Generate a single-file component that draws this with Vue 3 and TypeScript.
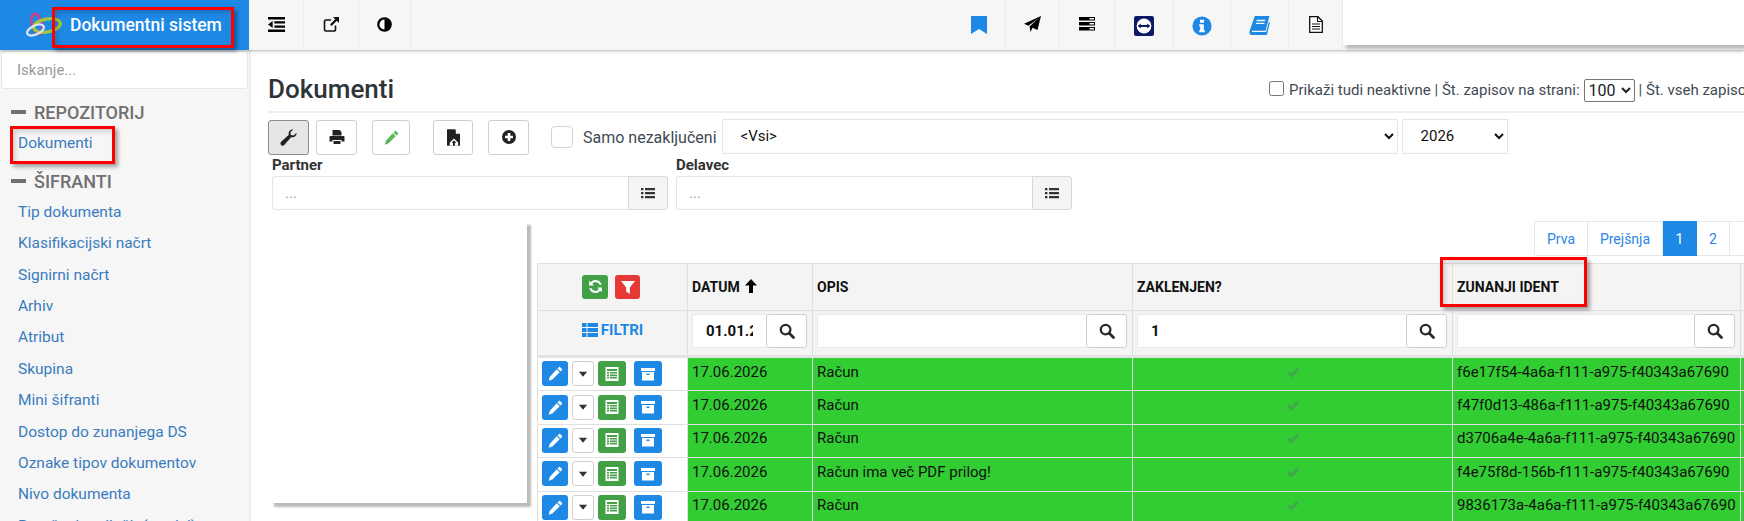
<template>
  <div class="page">
    <svg class="defs" width="0" height="0" aria-hidden="true">
      <symbol id="i-pencil" viewBox="0 0 16 16"><path d="M11.600 1.200c.4-.4 1-.4 1.400 0l1.800 1.800c.4.4.4 1 0 1.400l-1.500 1.500-3.200-3.200zM9.300 3.500l3.200 3.200-7.800 7.800L.8 15.600l1-4z" fill="currentColor" /></symbol>
      <symbol id="i-search" viewBox="0 0 16 16"><circle cx="6.600" cy="6.600" r="4.800" fill="none" stroke="currentColor" stroke-width="2.300" /><path d="M10 10l4.500 4.500" stroke="currentColor" stroke-width="2.800" stroke-linecap="round" /></symbol>
      <symbol id="i-list" viewBox="0 0 16 16"><path d="M1 3h2.400v2.200H1zM5 3h10v2.200H5zM1 7h2.400v2.200H1zM5 7h10v2.200H5zM1 11h2.400v2.200H1zM5 11h10v2.200H5z" fill="currentColor" /></symbol>
      <symbol id="i-thlist" viewBox="0 0 16 14"><path d="M0 0h4.500v4H0zM5.500 0H16v4H5.500zM0 5h4.500v4H0zM5.500 5H16v4H5.500zM0 10h4.500v4H0zM5.500 10H16v4H5.500z" fill="currentColor" /></symbol>
      <symbol id="i-caret" viewBox="0 0 16 16"><path d="M2.500 5h11L8 11.500z" fill="currentColor" /></symbol>
      <symbol id="i-listalt" viewBox="0 0 16 16"><path fill-rule="evenodd" d="M1.500 1h13v14h-13zM3 3v2h10V3zm0 3v1.600h2V6zm3 0v1.600h7V6zM3 8.400V10h2V8.400zm3 0V10h7V8.400zM3 10.800v1.600h2v-1.600zm3 0v1.600h7v-1.600z" fill="#fff" /></symbol>
      <symbol id="i-archive" viewBox="0 0 16 16"><path fill-rule="evenodd" d="M1 2h14v3H1zM2 6h12v8.500H2zm4.500 1.600v1.300h3V7.600z" fill="#fff" /></symbol>
    </svg>

    <header class="topbar">
      <div class="brand">
        <svg class="logo" viewBox="0 0 36 26" width="36" height="26">
          <ellipse cx="11" cy="12" rx="5" ry="10.500" transform="rotate(-15 11 12)" fill="none" stroke="#d63b7d" stroke-width="2.400" />
          <ellipse cx="21" cy="13.500" rx="13.500" ry="6.500" transform="rotate(-10 21 13.500)" fill="none" stroke="#a5c63b" stroke-width="3.200" />
          <ellipse cx="9.500" cy="18" rx="9" ry="4.500" transform="rotate(-25 9.500 18)" fill="none" stroke="#d8e6f5" stroke-width="2.200" />
        </svg>
        <span class="brand-name">Dokumentni sistem</span>
      </div>
      <nav class="tools">
        <a class="tool tool-first">
          <svg viewBox="0 0 16 14" width="17" height="15"><path d="M0 0h16v2.200H0zM6 3.900h10v2.100H6zM6 7.900h10V10H6zM0 11.800h16V14H0zM4.400 3.800v6.400L0 7z" fill="#000" /></svg>
        </a>
        <a class="tool tool-link">
          <svg viewBox="0 0 16 16" width="16" height="16"><path d="M8 4H3a1.500 1.500 0 0 0-1.500 1.500v8A1.500 1.500 0 0 0 3 15h8a1.500 1.500 0 0 0 1.500-1.500V9.500" fill="none" stroke="#111" stroke-width="1.600" /><path d="M10 1h6v6l-2.200-2.200-5.200 5.200-1.600-1.600 5.200-5.200z" fill="#111" /></svg>
        </a>
        <a class="tool tool-adjust">
          <svg viewBox="0 0 16 16" width="15" height="15"><circle cx="8" cy="8" r="6.600" fill="#fff" stroke="#000" stroke-width="2.400" /><path d="M8 2a6 6 0 0 1 0 12z" fill="#000" /></svg>
        </a>
        <span class="tools-gap"></span>
        <a class="tool tool-bookmark">
          <svg viewBox="0 0 16 18" width="16" height="18"><path d="M0 0h16v18l-8-5-8 5z" fill="#1e88e5" /></svg>
        </a>
        <a class="tool tool-plane">
          <svg viewBox="0 0 17 16" width="17" height="16"><path d="M17 0L13.500 14 8.600 11.800 6.400 16 5.600 10.600 14 2.600 4.400 9.700 0 7.800z" fill="#000" /></svg>
        </a>
        <a class="tool tool-server">
          <svg viewBox="0 0 16 14" width="16" height="14"><path fill-rule="evenodd" d="M0 0h16v3.600H0zM10.500 1v1.500H15V1zM0 5h16v3.600H0zM10.500 6v1.500H15V6zM0 10h16v3.600H0zM10.500 11v1.500H15V11z" fill="#000" /></svg>
        </a>
        <a class="tool tool-tv">
          <svg viewBox="0 0 20 20" width="20" height="20"><rect width="20" height="20" rx="2" fill="#0c1a66" /><circle cx="10" cy="10" r="7.400" fill="#fff" /><path d="M3.800 10l3-2.600v1.700h6.400V7.400l3 2.600-3 2.600v-1.700H6.800v1.700z" fill="#0c1a66" /></svg>
        </a>
        <a class="tool tool-info">
          <svg viewBox="0 0 20 20" width="20" height="20"><circle cx="10" cy="10" r="9.600" fill="#1e88e5" /><path d="M8 3.800h4v3H8zM7.200 8.300h4.600v6h1v2H7.200v-2h1v-4h-1z" fill="#fff" /></svg>
        </a>
        <a class="tool tool-book">
          <svg viewBox="0 0 22 20" width="21" height="19"><path fill-rule="evenodd" d="M6 0h15.500l-4 15.500H3.800c-1 0-1.300 1-.6 1.400H18L21 6l1 .8L18.800 20H3C.8 20 0 18 .5 16zM8 4v1.400h9V4zM7.200 7v1.400h9V7z" fill="#1e88e5" /></svg>
        </a>
        <a class="tool tool-file">
          <svg viewBox="0 0 14 17" width="14" height="17"><path d="M.7.7h8.200l4.400 4.400v11.200H.7z" fill="#fff" stroke="#111" stroke-width="1.300" /><path d="M8.500.7v4.800h4.800M3 8h8M3 10.500h8M3 13h8" fill="none" stroke="#111" stroke-width="1.100" /></svg>
        </a>
      </nav>
    </header>

    <div class="layout">
      <aside class="sidebar">
        <input class="side-search" type="text" placeholder="Iskanje..." />
        <div class="side-group" v-for="group in menu" :key="group.title">
          <h4 class="side-title"><i class="minus"></i>{{ group.title }}</h4>
          <a class="side-link" v-for="item in group.items" :key="item">{{ item }}</a>
        </div>
      </aside>

      <main class="content">
        <div class="heading">
          <h1 class="title">Dokumenti</h1>
          <div class="page-opts">
            <input class="opt-check" type="checkbox" />
            <span>Prikaži tudi neaktivne | Št. zapisov na strani:</span>
            <select class="page-size"><option>100</option></select>
            <span>| Št. vseh zapisov: 1240</span>
          </div>
        </div>

        <div class="actions">
          <button class="btn btn-on btn-wrench">
            <svg viewBox="0 0 16 16" width="17" height="17"><path d="M15.500 3.600c.4 2.600-2 5-4.800 4L4 15c-.9.900-2.200.9-3 .1s-.8-2 .1-3l7.200-6.700C7.400 2.600 9.800.1 12.500.5L9.800 3l.4 2.700 2.700.5z" fill="#222" /></svg>
          </button>
          <button class="btn btn-print">
            <svg viewBox="0 0 16 16" width="16" height="16"><path fill-rule="evenodd" d="M3.500 1h7l2 2v3.500h-9zM1.500 7h13a1 1 0 0 1 1 1v4.500h-3V11h-9v1.500h-3V8a1 1 0 0 1 1-1zM4.500 12h7v3h-7z" fill="#222" /></svg>
          </button>
          <button class="btn btn-edit">
            <svg width="15" height="15" class="ico-green"><use href="#i-pencil" /></svg>
          </button>
          <button class="btn btn-pdf">
            <svg viewBox="0 0 14 18" width="13" height="17"><path d="M0 0h8.500L14 5.500V18H0z" fill="#222" /><path d="M9.500.5L13.500 5H9.500z" fill="#fff" /><path d="M7.500 10L12 14.500v3.500H3v-3.500z" fill="#fff" /><path d="M7.500 12l2.500 3H8.500v3h-2v-3H5z" fill="#222" /></svg>
          </button>
          <button class="btn btn-add">
            <svg viewBox="0 0 16 16" width="14" height="14"><circle cx="8" cy="8" r="8" fill="#222" /><path d="M6.500 3.500h3v3h3v3h-3v3h-3v-3h-3v-3h3z" fill="#fff" /></svg>
          </button>
          <input class="only-open" type="checkbox" />
          <span class="only-label">Samo nezaključeni</span>
          <select class="sel sel-wide"><option>&lt;Vsi&gt;</option></select>
          <select class="sel sel-year"><option>2026</option></select>
        </div>

        <div class="pickers">
          <div class="picker" v-for="label in ['Partner', 'Delavec']" :key="label">
            <label class="picker-label">{{ label }}</label>
            <div class="picker-box">
              <input class="picker-input" type="text" placeholder="..." />
              <span class="picker-addon"><svg width="16" height="16"><use href="#i-list" /></svg></span>
            </div>
          </div>
        </div>

        <div class="results">
          <div class="blank-col"><div class="blank-panel"></div></div>
          <div class="results-main">
            <ul class="pager">
              <li class="pg pg-first">Prva</li>
              <li class="pg pg-prev">Prejšnja</li>
              <li class="pg pg-on">1</li>
              <li class="pg pg-num">2</li>
              <li class="pg pg-num"></li>
            </ul>
            <div class="grid">
              <div class="th th-tools">
                <span class="mini mini-green">
                  <svg viewBox="0 0 16 16" width="17" height="17"><path d="M13.800 6.400A6 6 0 0 0 3.500 4L2 2.500V7h4.500L4.900 5.400a4 4 0 0 1 6.900 1zM2.200 9.600A6 6 0 0 0 12.500 12l1.500 1.500V9H9.500l1.600 1.600a4 4 0 0 1-6.900-1z" fill="#fff" /></svg>
                </span>
                <span class="mini mini-red">
                  <svg viewBox="0 0 16 16" width="16" height="16"><path d="M1 2h14L9.800 8.500V15l-3.600-2.500v-4z" fill="#fff" /></svg>
                </span>
              </div>
              <div class="th">DATUM
                <svg class="sort" viewBox="0 0 12 14" width="12" height="14"><path d="M6 0l6 6.500H8V14H4V6.500H0z" fill="#000" /></svg>
              </div>
              <div class="th">OPIS</div>
              <div class="th">ZAKLENJEN?</div>
              <div class="th th-ident">ZUNANJI IDENT</div>
              <div class="th"></div>

              <div class="tf tf-label">
                <svg width="16" height="14"><use href="#i-thlist" /></svg>FILTRI
              </div>
              <div class="tf" v-for="value in filters" :key="value">
                <input class="tf-input" type="text" :value="value" />
                <button class="tf-btn"><svg width="16" height="16"><use href="#i-search" /></svg></button>
              </div>
              <div class="tf"></div>

              <template v-for="row in rows" :key="row.ident">
                <div class="td td-actions">
                  <span class="act act-blue"><svg width="15" height="15"><use href="#i-pencil" /></svg></span>
                  <span class="act act-caret"><svg width="12" height="12"><use href="#i-caret" /></svg></span>
                  <span class="act act-green"><svg width="16" height="16"><use href="#i-listalt" /></svg></span>
                  <span class="act act-archive"><svg width="16" height="16"><use href="#i-archive" /></svg></span>
                </div>
                <div class="td td-green">{{ row.date }}</div>
                <div class="td td-green">{{ row.text }}</div>
                <div class="td td-green td-check">
                  <svg viewBox="0 0 16 14" width="14" height="12"><path d="M1 7.500L3.500 5 6 7.500 12.500 1 15 3.500 6 12.500z" fill="#3fa84a" /></svg>
                </div>
                <div class="td td-green">{{ row.ident }}</div>
                <div class="td td-green"></div>
              </template>
            </div>
          </div>
        </div>
      </main>
    </div>

    <div class="mask-top"></div>
    <div class="mark mark-brand"></div>
    <div class="mark mark-nav"></div>
    <div class="mark mark-col"></div>
  </div>
</template>

<script setup lang="ts">
interface Row {
  date: string
  text: string
  ident: string
}

const menu = [
  { title: 'REPOZITORIJ', items: ['Dokumenti'] },
  {
    title: 'ŠIFRANTI',
    items: [
      'Tip dokumenta',
      'Klasifikacijski načrt',
      'Signirni načrt',
      'Arhiv',
      'Atribut',
      'Skupina',
      'Mini šifranti',
      'Dostop do zunanjega DS',
      'Oznake tipov dokumentov',
      'Nivo dokumenta',
      'Poročanje odločb (model)',
    ],
  },
]

const filters = ['01.01.2026', '', '1', ' ']

const rows: Row[] = [
  { date: '17.06.2026', text: 'Račun', ident: 'f6e17f54-4a6a-f111-a975-f40343a67690' },
  { date: '17.06.2026', text: 'Račun', ident: 'f47f0d13-486a-f111-a975-f40343a67690' },
  { date: '17.06.2026', text: 'Račun', ident: 'd3706a4e-4a6a-f111-a975-f40343a67690' },
  { date: '17.06.2026', text: 'Račun ima več PDF prilog!', ident: 'f4e75f8d-156b-f111-a975-f40343a67690' },
  { date: '17.06.2026', text: 'Račun', ident: '9836173a-4a6a-f111-a975-f40343a67690' },
]
</script>

<style>
html,
body {
  margin: 0;
  overflow: hidden;
  background: #fff;
}
</style>

<style scoped>
.page {
  position: relative;
  width: 1744px;
  height: 521px;
  overflow: hidden;
  font-family: Roboto, "Liberation Sans", sans-serif;
  font-size: 15px;
  color: #333;
}
.defs {
  position: absolute;
}
.topbar {
  display: flex;
  height: 50px;
  background: #f6f6f6;
  box-shadow: 0 1px 3px rgba(0, 0, 0, 0.3);
  position: relative;
  z-index: 2;
}
.brand {
  width: 249px;
  flex: none;
  background: #1e88e5;
  display: flex;
  align-items: center;
  padding-left: 26px;
  box-sizing: border-box;
  color: #fff;
}
.logo {
  flex: none;
  margin-top: -1px;
}
.brand-name {
  margin-left: 8px;
  margin-top: -1px;
  font-size: 17.500px;
  font-weight: 500;
  white-space: nowrap;
}
.tools {
  display: flex;
  flex: 1;
}
.tool {
  display: flex;
  align-items: center;
  justify-content: center;
  border-right: 1px solid #ebebeb;
  box-sizing: border-box;
  height: 50px;
  padding-bottom: 2px;
}
.tool-first { width: 55px; }
.tool-link { width: 55px; }
.tool-adjust { width: 52px; }
.tools-gap { width: 510px; }
.tool-plane { width: 54px; }
.tool-server { width: 55px; }
.tool-tv { width: 59px; padding: 2px 0 0; }
.tool-info { width: 57px; padding: 2px 0 0; }
.tool-book { width: 58px; padding: 1px 0 0; }
.tool-file { width: 54px; }
.tool-bookmark { width: 85px; padding: 0 0 0 32px; }

.layout {
  display: flex;
  height: 471px;
}
.sidebar {
  width: 251px;
  flex: none;
  box-sizing: border-box;
  background: #f6f6f6;
  border-right: 2px solid #eeeeee;
  padding-top: 1px;
  overflow: hidden;
}
.side-search {
  display: block;
  box-sizing: border-box;
  width: 247px;
  height: 38px;
  margin: 0 0 0 1px;
  padding: 0 15px;
  border: 1px solid #e2e7ee;
  border-radius: 3px;
  background: #fff;
  font: 15px Roboto, sans-serif;
}
.side-search::placeholder {
  color: #999;
  opacity: 1;
}
.side-group:first-of-type {
  margin-top: 11px;
}
.side-title {
  display: flex;
  align-items: center;
  margin: 0;
  height: 24px;
  padding-left: 11px;
  font-size: 18px;
  font-weight: 500;
  color: #707070;
}
.minus {
  width: 15px;
  height: 4px;
  background: #707070;
  margin-right: 8px;
}
.side-link {
  display: block;
  padding-left: 18px;
  height: 31.400px;
  line-height: 31.400px;
  font-size: 15.500px;
  color: #3a7cbd;
  white-space: nowrap;
}
.side-link:first-of-type {
  margin-top: 2px;
}
.side-group:first-of-type .side-link {
  line-height: 34px;
}
.side-group + .side-group {
  margin-top: 12px;
}
.side-group + .side-group .side-link:first-of-type {
  margin-top: 3.500px;
}

.content {
  flex: none;
  width: 1493px;
  padding-left: 17px;
  box-sizing: border-box;
}
.heading {
  display: flex;
  height: 61px;
  border-bottom: 2px solid #eeeeee;
  width: 1476px;
  white-space: nowrap;
}
.title {
  flex: 0 0 1001px;
  margin: 21px 0 0;
  font-size: 26px;
  font-weight: 500;
  line-height: 36px;
  color: #2f3439;
}
.page-opts {
  display: flex;
  align-items: center;
  height: 24px;
  margin-top: 28px;
  gap: 4px;
  color: #3f4a54;
}
.opt-check {
  width: 15px;
  height: 15px;
  margin: 0 1px 3px 0;
}
.page-size {
  width: 51px;
  height: 23px;
  font: 16px Roboto, sans-serif;
  background: #fff;
  border: 1px solid #767676;
  border-radius: 2px;
  color: #222;
}
.actions {
  display: flex;
  align-items: center;
  height: 36px;
  margin-top: 6px;
  position: relative;
}
.btn {
  display: flex;
  align-items: center;
  justify-content: center;
  height: 35px;
  padding: 0;
  background: #fff;
  border: 1px solid #cfcfcf;
  border-radius: 3px;
  box-sizing: border-box;
}
.btn-wrench {
  width: 41px;
  background: #e6e6e6;
  border-color: #8c8c8c;
}
.btn-print { width: 41px; margin-left: 7px; }
.btn-edit { width: 38px; margin-left: 15px; }
.btn-pdf { width: 40px; margin-left: 23px; }
.btn-add { width: 41px; margin-left: 15px; }
.ico-green {
  color: #5cb85c;
}
.only-open {
  appearance: none;
  box-sizing: border-box;
  width: 22px;
  height: 22px;
  margin: 0 0 0 22px;
  border: 1px solid #d4d4d4;
  border-radius: 4px;
  background: #fff;
}
.only-label {
  margin-left: 10px;
  font-size: 16px;
  color: #3f4a54;
  white-space: nowrap;
}
.sel {
  height: 35px;
  margin-top: -2px;
  box-sizing: border-box;
  border: 1px solid #dfe6ee;
  background: #fff;
  color: #111;
  font: 15px Roboto, sans-serif;
  padding: 0 14px;
}
.sel-wide {
  width: 676px;
  margin-left: 5px;
}
.sel-year {
  width: 106px;
  margin-left: 4px;
  padding-left: 14px;
}
.pickers {
  display: flex;
  gap: 8px;
  padding-left: 4px;
  margin-top: 0;
}
.picker {
  width: 396px;
}
.picker-label {
  display: block;
  height: 21px;
  line-height: 20px;
  font-size: 15px;
  font-weight: 700;
  color: #333;
}
.picker-box {
  display: flex;
  height: 34px;
}
.picker-input {
  flex: 1;
  min-width: 0;
  box-sizing: border-box;
  border: 1px solid #dfe6ee;
  border-right: 0;
  border-radius: 3px 0 0 3px;
  padding: 0 12px;
  font: 15px Roboto, sans-serif;
}
.picker-input::placeholder {
  color: #999;
  opacity: 1;
}
.picker-addon {
  width: 40px;
  display: flex;
  align-items: center;
  justify-content: center;
  box-sizing: border-box;
  background: #f4f4f4;
  border: 1px solid #d8d8d8;
  border-radius: 0 3px 3px 0;
  color: #333;
}
.results {
  display: grid;
  grid-template-columns: 269px 1208px;
  margin-top: 5px;
}
.blank-col {
  padding: 6px 0 0 2px;
}
.blank-panel {
  width: 256.500px;
  height: 282px;
  background: #fff;
  box-shadow: 4px 4px 2px rgba(0, 0, 0, 0.27);
}
.pager {
  list-style: none;
  margin: 6px 0 0 997px;
  padding: 0;
  height: 35px;
  display: flex;
}
.pg {
  flex: none;
  display: flex;
  align-items: center;
  justify-content: center;
  box-sizing: border-box;
  border: 1px solid #e8e8e8;
  border-left: 0;
  color: #2a86e5;
  font-size: 14px;
  white-space: nowrap;
}
.pg-first {
  width: 54px;
  border-left: 1px solid #e8e8e8;
  border-radius: 3px 0 0 3px;
}
.pg-prev {
  width: 75px;
}
.pg-on {
  width: 34px;
  background: #1e88e5;
  border-color: #1e88e5;
  color: #fff;
}
.pg-num {
  width: 33px;
}
.grid {
  display: grid;
  grid-template-columns: 150px 125px 320px 320px 288px 400px;
  grid-template-rows: 47px 47px repeat(5, 33.400px);
  margin-top: 7px;
  border-top: 1px solid #e0e0e0;
  margin-right: -300px;
}
.th,
.tf {
  background: #f4f4f4;
  border-left: 1px solid #e0e0e0;
  border-bottom: 1px solid #e0e0e0;
  box-sizing: border-box;
}
.th {
  display: flex;
  align-items: center;
  padding-left: 4px;
  font-size: 14px;
  font-weight: 700;
  color: #111;
}
.sort {
  margin-left: 5px;
  margin-top: -2px;
}
.th-tools {
  justify-content: center;
  gap: 7px;
  padding: 0 3px 1px 0;
}
.mini {
  display: flex;
  align-items: center;
  justify-content: center;
  height: 24px;
  border-radius: 3px;
  box-sizing: border-box;
}
.mini-green {
  width: 26px;
  background: #43a047;
}
.mini-red {
  width: 25px;
  background: #e53935;
}
.tf {
  display: flex;
  align-items: center;
  padding: 0 5px 5px 4px;
  border-bottom: 3px solid #e4e4e4;
}
.tf-label {
  justify-content: center;
  gap: 3px;
  padding: 0 0 6px;
  font-weight: 700;
  font-size: 15px;
  color: #1e88e5;
}
.tf-input {
  flex: 1;
  min-width: 0;
  height: 34px;
  box-sizing: border-box;
  border: 1px solid #e6e9ee;
  border-right: 0;
  padding: 0 13px;
  font: 700 15px Roboto, sans-serif;
  color: #111;
  background: #fff;
}
.tf-btn {
  flex: none;
  display: flex;
  align-items: center;
  justify-content: center;
  width: 41px;
  height: 34px;
  padding: 0;
  background: #fff;
  border: 1px solid #cfcfcf;
  border-radius: 3px;
  color: #2b2b2b;
}
.td {
  display: flex;
  align-items: center;
  padding: 0 4px 5px;
  box-sizing: border-box;
  border-left: 1px solid #e0e0e0;
  border-bottom: 1px solid #e0e0e0;
  font-size: 15px;
  color: #111;
  white-space: nowrap;
}
.td-green {
  background: #32cd32;
}
.td-check {
  justify-content: center;
  padding-bottom: 3px;
}
.td-actions {
  padding: 0 0 1px 4px;
  background: #fff;
}
.act {
  display: flex;
  align-items: center;
  justify-content: center;
  height: 25px;
  box-sizing: border-box;
  border-radius: 3px;
  color: #fff;
}
.act-blue {
  width: 26px;
  background: #1e88e5;
}
.act-caret {
  width: 22px;
  margin-left: 4px;
  background: #fff;
  border: 1px solid #cfcfcf;
  color: #333;
}
.act-green {
  width: 28px;
  margin-left: 4px;
  background: #43a047;
}
.act-archive {
  width: 28px;
  margin-left: 8px;
  background: #1e88e5;
}
.mask-top {
  position: absolute;
  z-index: 3;
  left: 1343px;
  top: 0;
  right: 0;
  height: 45px;
  background: #fff;
  box-shadow: 3px 4px 3px rgba(0, 0, 0, 0.24);
}
.mark {
  position: absolute;
  z-index: 4;
  box-sizing: border-box;
  border: 3px solid #f00;
  box-shadow: 3px 3px 4px rgba(0, 0, 0, 0.35), inset 3px 3px 4px rgba(0, 0, 0, 0.15);
}
.mark-brand {
  left: 52px;
  top: 7px;
  width: 182px;
  height: 41px;
}
.mark-nav {
  left: 10px;
  top: 126px;
  width: 105px;
  height: 38px;
}
.mark-col {
  left: 1440px;
  top: 257px;
  width: 147px;
  height: 50px;
}
</style>
